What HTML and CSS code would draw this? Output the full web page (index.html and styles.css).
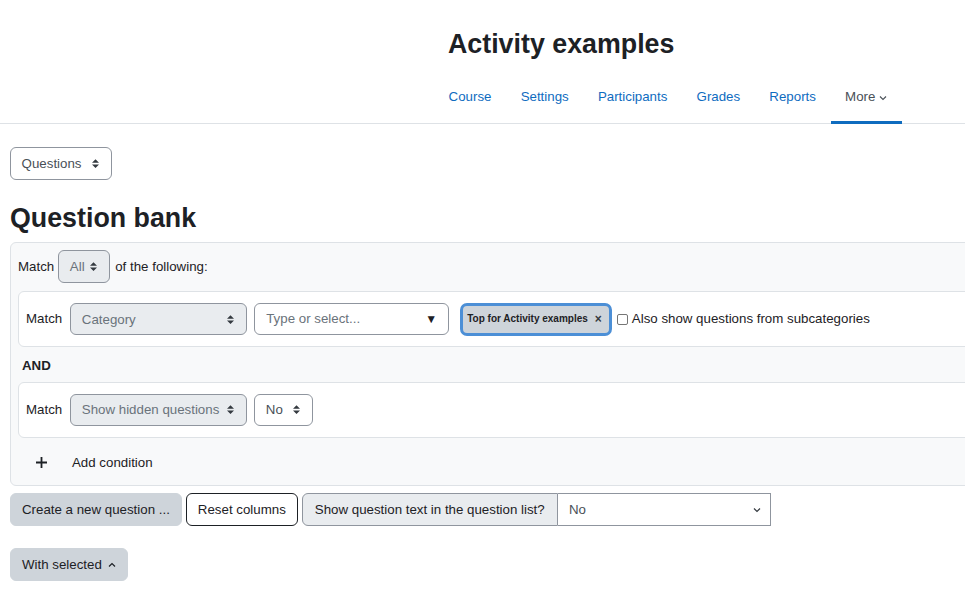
FILE: index.html
```html
<!DOCTYPE html>
<html lang="en">
<head>
<meta charset="utf-8">
<title>Question bank</title>
<link rel="stylesheet" href="styles.css">
</head>
<body>
<header class="page-header">
  <h1 class="course-title">Activity examples</h1>
  <nav class="course-nav">
    <a class="nav-link" href="#">Course</a>
    <a class="nav-link" href="#">Settings</a>
    <a class="nav-link" href="#">Participants</a>
    <a class="nav-link" href="#">Grades</a>
    <a class="nav-link" href="#">Reports</a>
    <a class="nav-link active" href="#">More<svg class="chev" width="8" height="6" viewBox="0 0 8 6"><path d="M1 1.5 4 4.5 7 1.5" fill="none" stroke="currentColor" stroke-width="1.1"/></svg></a>
  </nav>
</header>
<main class="main">
  <div class="select sel-questions"><span>Questions</span><svg class="updown" width="7" height="9" viewBox="0 0 4 5"><path d="M2 0L0 2h4zm0 5L0 3h4z" fill="#343a40"/></svg></div>
  <h2 class="bank-title">Question bank</h2>
  <div class="filters">
    <div class="match-row">
      <span>Match</span>
      <div class="select disabled sel-all"><span>All</span><svg class="updown" width="7" height="9" viewBox="0 0 4 5"><path d="M2 0L0 2h4zm0 5L0 3h4z" fill="#343a40"/></svg></div>
      <span>of the following:</span>
    </div>
    <div class="cond">
      <span class="cond-label">Match</span>
      <div class="select disabled sel-cond"><span>Category</span><svg class="updown" width="7" height="9" viewBox="0 0 4 5"><path d="M2 0L0 2h4zm0 5L0 3h4z" fill="#343a40"/></svg></div>
      <div class="combo"><span class="placeholder">Type or select...</span><span class="down">▼</span></div>
      <span class="chip">Top for Activity examples<span class="chip-x">×</span></span>
      <label class="check"><span class="box"></span>Also show questions from subcategories</label>
    </div>
    <div class="and">AND</div>
    <div class="cond">
      <span class="cond-label">Match</span>
      <div class="select disabled sel-cond"><span>Show hidden questions</span><svg class="updown" width="7" height="9" viewBox="0 0 4 5"><path d="M2 0L0 2h4zm0 5L0 3h4z" fill="#343a40"/></svg></div>
      <div class="select sel-no"><span>No</span><svg class="updown" width="7" height="9" viewBox="0 0 4 5"><path d="M2 0L0 2h4zm0 5L0 3h4z" fill="#343a40"/></svg></div>
    </div>
    <div class="add-row">
      <svg class="plus" width="11" height="11" viewBox="0 0 11 11"><path d="M5.5 0v11M0 5.5h11" stroke="#1d2125" stroke-width="1.8"/></svg>
      <span>Add condition</span>
    </div>
  </div>
  <div class="actions">
    <button class="btn btn-secondary">Create a new question ...</button>
    <button class="btn btn-outline">Reset columns</button>
    <div class="input-group">
      <span class="ig-label">Show question text in the question list?</span>
      <div class="ig-select"><span>No</span><svg width="8" height="6" viewBox="0 0 8 6"><path d="M1 1.5 4 4.5 7 1.5" fill="none" stroke="#343a40" stroke-width="1.2"/></svg></div>
    </div>
  </div>
  <div class="bulk">
    <button class="btn btn-secondary">With selected<svg class="chev-up" width="8" height="6" viewBox="0 0 8 6"><path d="M1 4.5 4 1.5 7 4.5" fill="none" stroke="#1d2125" stroke-width="1.2"/></svg></button>
  </div>
</main>
</body>
</html>
```

FILE: styles.css
```css
html, body {
  margin: 0;
  padding: 0;
  overflow: hidden;
  background: #fff;
}
body {
  font-family: "Liberation Sans", Arial, sans-serif;
  font-size: 13.3px;
  line-height: 20px;
  color: #1d2125;
}

.page-header {
  padding-top: 28px;
  border-bottom: 1px solid #dee2e6;
}
.course-title {
  margin: 0 0 0 448px;
  font-size: 26.8px;
  line-height: 32.4px;
  font-weight: bold;
}
.course-nav {
  display: flex;
  margin: 13px 0 -1px 434px;
}
.nav-link {
  display: flex;
  align-items: center;
  padding: 14px 14.6px;
  border-bottom: 3px solid transparent;
  color: #0f6cbf;
  text-decoration: none;
}
.nav-link.active {
  color: #495057;
  border-bottom-color: #0f6cbf;
}
.chev {
  margin-left: 4px;
  margin-top: 1px;
}

.main {
  padding: 23px 10px 0 10px;
}

.select {
  box-sizing: border-box;
  height: 32.6px;
  display: flex;
  align-items: center;
  justify-content: space-between;
  padding: 0 12px 0 10.6px;
  border: 1px solid #8f959e;
  border-radius: 6px;
  background: #fff;
  color: #495057;
}
.select > span {
  padding-top: 1px;
}
.select.disabled {
  background: #e9ecef;
  color: #6a737b;
}
.updown {
  flex: none;
}
.sel-questions { width: 102px; }
.sel-all { width: 52px; margin: 0 5px 0 4px; }
.sel-cond { width: 177px; }
.sel-no { width: 59px; margin-left: 7px; }

.bank-title {
  margin: 22px 0 8px 0;
  font-size: 26.8px;
  line-height: 32.4px;
  font-weight: bold;
}

.filters {
  width: 1100px;
  box-sizing: border-box;
  background: #f8f9fa;
  border: 1px solid #dee2e6;
  border-radius: 6px;
  padding: 7px 7px 7px 7px;
}
.match-row {
  display: flex;
  align-items: center;
}
.cond {
  display: flex;
  align-items: center;
  margin-top: 8px;
  background: #fff;
  border: 1px solid #dee2e6;
  border-radius: 6px;
  padding: 10.5px 7px;
}
.cond-label {
  margin-right: 8px;
}
.combo {
  box-sizing: border-box;
  width: 195px;
  height: 32.6px;
  margin-left: 7px;
  display: flex;
  align-items: center;
  justify-content: space-between;
  padding: 0 11px 0 11px;
  border: 1px solid #8f959e;
  border-radius: 6px;
  background: #fff;
}
.placeholder {
  color: #6a737b;
}
.down {
  font-size: 12px;
  color: #1d2125;
}
.chip {
  box-sizing: border-box;
  height: 33px;
  margin-left: 11px;
  display: flex;
  align-items: center;
  padding: 0 7px 0 4px;
  border: 3px solid #4c8fd6;
  border-radius: 7px;
  background: #ced4da;
  font-size: 10px;
  font-weight: bold;
  color: #1d2125;
}
.chip-x {
  margin-left: 7px;
  font-size: 12px;
  font-weight: bold;
  color: #343a40;
}
.check {
  display: flex;
  align-items: center;
  margin-left: 5px;
}
.box {
  box-sizing: border-box;
  width: 11px;
  height: 11px;
  margin-right: 4px;
  border: 1px solid #767676;
  border-radius: 2px;
  background: #fff;
}
.and {
  margin: 8.6px 0 6.6px 4px;
  font-weight: bold;
}
.and + .cond {
  margin-top: 0;
}
.add-row {
  display: flex;
  align-items: center;
  margin-top: 15px;
  padding-left: 18px;
  padding-bottom: 5px;
}
.plus {
  margin-right: 25px;
}

.actions {
  display: flex;
  align-items: center;
  gap: 4px;
  margin-top: 7px;
}
.btn {
  box-sizing: border-box;
  height: 33px;
  display: inline-flex;
  align-items: center;
  padding: 1px 11px 0;
  border: 1px solid transparent;
  border-radius: 6px;
  font-family: inherit;
  font-size: 13.3px;
  color: #1d2125;
  background: #fff;
}
.btn-secondary {
  background: #ced4da;
  border-color: #ced4da;
}
.btn-outline {
  border-color: #1d2125;
}
.input-group {
  display: flex;
  height: 33px;
}
.ig-label {
  box-sizing: border-box;
  display: flex;
  align-items: center;
  padding: 1px 12px 0;
  background: #e9ecef;
  border: 1px solid #8f959e;
  border-radius: 6px 0 0 6px;
}
.ig-select {
  box-sizing: border-box;
  width: 213px;
  display: flex;
  align-items: center;
  justify-content: space-between;
  padding: 1px 9px 0 11.3px;
  border: 1px solid #8f959e;
  border-left: 0;
  color: #495057;
}
.bulk {
  margin-top: 22px;
}
.chev-up {
  margin-left: 6px;
}
```
